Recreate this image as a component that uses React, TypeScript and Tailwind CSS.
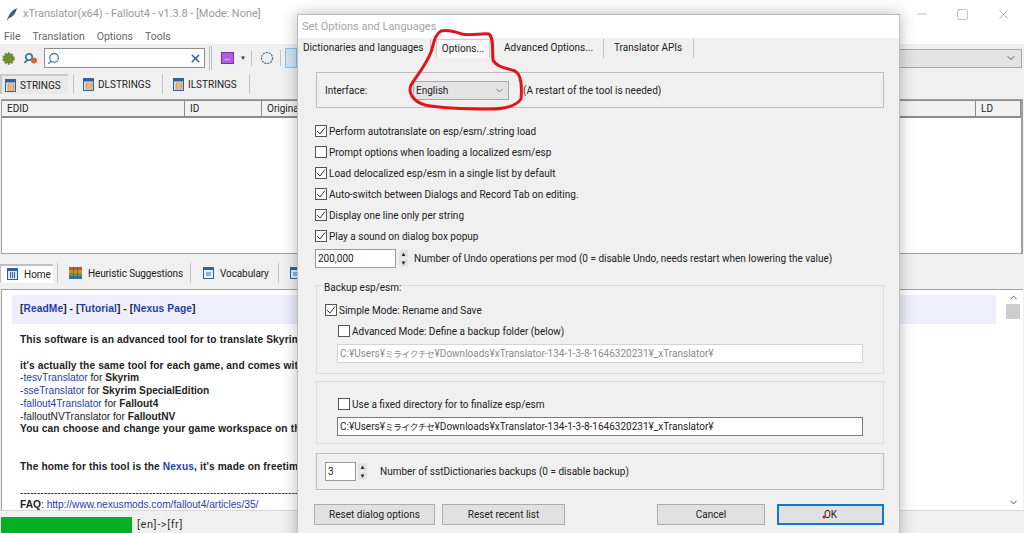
import type { ReactNode } from "react";
import { ChevronDown, ChevronUp, X, Minus, Square, Search } from "lucide-react";

const ui = "font-['Roboto','Noto_Sans',sans-serif]";

function SheetIcon() {
  return (
    <svg width="11" height="13" viewBox="0 0 11 13" className="shrink-0">
      <rect x="0.5" y="0.5" width="10" height="12" fill="#dfe8f2" stroke="#2f6496" />
      <rect x="0.5" y="0.5" width="10" height="3" fill="#2f6496" />
      <rect x="3" y="5" width="6" height="6" fill="#f4d9b8" stroke="#d9772b" strokeWidth="0.7" />
      <path d="M3 7h6M3 9h6" stroke="#d9772b" strokeWidth="0.7" />
    </svg>
  );
}

function HomeIcon() {
  return (
    <svg width="11" height="12" viewBox="0 0 11 12" className="shrink-0">
      <rect x="0.5" y="0.5" width="10" height="11" fill="#dbe8f3" stroke="#2f6496" />
      <rect x="0.5" y="0.5" width="10" height="2.5" fill="#2f6496" />
      <path d="M3.5 4v6M5.5 4v6M7.5 4v6" stroke="#2f6496" />
    </svg>
  );
}

function HeuristicIcon() {
  return (
    <svg width="13" height="12" viewBox="0 0 13 12" className="shrink-0">
      <rect width="13" height="3" fill="#c4552d" />
      <rect y="3" width="13" height="3" fill="#d08c33" />
      <rect y="6" width="13" height="3" fill="#5f9a44" />
      <rect y="9" width="13" height="3" fill="#3b6f9c" />
      <path d="M4.5 0v12M8.5 0v12" stroke="#555" strokeWidth="0.6" />
    </svg>
  );
}

function VocabularyIcon() {
  return (
    <svg width="11" height="12" viewBox="0 0 11 12" className="shrink-0">
      <rect x="0.5" y="0.5" width="10" height="11" fill="#e6eef6" stroke="#2f6496" />
      <rect x="0.5" y="0.5" width="10" height="2.5" fill="#2f6496" />
      <rect x="3" y="5" width="5" height="4" fill="#8fb4d6" />
    </svg>
  );
}

function Sep({ className = "h-[23px]" }: { className?: string }) {
  return <div className={`w-px shrink-0 bg-[#c4c4c4] ${className}`} />;
}

function StringTab({ label, active, w, ml }: { label: string; active?: boolean; w: number; ml: number }) {
  return (
    <div
      style={{ width: w, marginLeft: ml }}
      className={`flex h-[20px] shrink-0 items-center gap-[4px] text-[10px] text-[#222] ${active ? "border-l-2 border-t-2 border-[#c9c9c9] bg-[#e9e9e9] pl-[3px]" : ""}`}
    >
      <SheetIcon />
      {label}
    </div>
  );
}

function Check({ checked }: { checked?: boolean }) {
  return (
    <span className="flex size-[12px] shrink-0 items-center justify-center border border-[#555] bg-white">
      {checked && (
        <svg width="10" height="10" viewBox="0 0 10 10">
          <path d="M1 5l3 3 5-6.5" fill="none" stroke="#333" strokeWidth="1" />
        </svg>
      )}
    </span>
  );
}

function CheckRow({ label, checked, className = "" }: { label: string; checked?: boolean; className?: string }) {
  return (
    <div className={`flex h-[14px] items-center gap-[2px] whitespace-nowrap ${className}`}>
      <Check checked={checked} />
      <span>{label}</span>
    </div>
  );
}

function Spin() {
  return (
    <div className="flex h-[18px] w-[9px] shrink-0 flex-col gap-px text-[#222]">
      <div className="flex h-[8px] items-center justify-center bg-[#e3e3e3] text-[6px] leading-none">▲</div>
      <div className="flex h-[8px] items-center justify-center bg-[#e3e3e3] text-[6px] leading-none">▼</div>
    </div>
  );
}

function Btn({ children, w, primary }: { children: ReactNode; w: number; primary?: boolean }) {
  return (
    <div
      style={{ width: w }}
      className={`flex h-[21px] items-center justify-center bg-[#e1e1e1] text-[10px] ${primary ? "border-2 border-[#0a78d7]" : "border border-[#adadad]"}`}
    >
      {children}
    </div>
  );
}

function Col({ label, w, grow }: { label: string; w?: number; grow?: boolean }) {
  return (
    <div
      style={w ? { width: w } : undefined}
      className={`flex h-full shrink-0 items-center border-r border-[#8c8c8c] pl-[5px] text-[10px] ${grow ? "flex-1" : ""}`}
    >
      {label}
    </div>
  );
}

function PathText() {
  return (
    <>
      C:¥Users¥
      <span className="font-['Noto_Sans_CJK_JP',sans-serif] text-[8.5px] tracking-[-0.2px]">ミライクチセ</span>
      ¥Downloads¥xTranslator-134-1-3-8-1646320231¥_xTranslator¥
    </>
  );
}

export default function App() {
  return (
    <div className={`relative flex h-[533px] w-[1024px] flex-col overflow-hidden bg-[#f0f0f0] text-[#222] ${ui}`}>
      {/* title + menu */}
      <div className="flex h-[28px] shrink-0 items-center bg-white pl-[6px] text-[11px] text-[#9a9a9a]">
        <svg width="12" height="15" viewBox="0 0 12 15" className="mr-[5px] shrink-0">
          <path d="M1 14C2 8 6 3 11 1 10 6 7 10 3 11z" fill="#4a5a78" />
        </svg>
        <span className="tracking-[-0.05px]">xTranslator(x64) - Fallout4 - v1.3.8 - [Mode: None]</span>
        <div className="ml-auto flex items-center gap-[27px] pr-[13px] text-[#8a8a8a]">
          <Minus size={14} strokeWidth={1} />
          <Square size={13} strokeWidth={1} />
          <X size={15} strokeWidth={1} />
        </div>
      </div>
      <div className="flex h-[16px] shrink-0 items-center gap-[12px] bg-white pl-[4px] pt-px text-[10.5px] text-[#666]">
        <span>File</span>
        <span>Translation</span>
        <span>Options</span>
        <span>Tools</span>
      </div>

      {/* toolbar */}
      <div className="flex h-[28px] shrink-0 items-center pl-[2px] pr-[2px]">
        <svg width="13" height="13" viewBox="0 0 13 13" className="shrink-0">
          <circle cx="6.5" cy="6.5" r="5" fill="#6c8f2f" stroke="#6c8f2f" strokeWidth="2.4" strokeDasharray="2 1.2" />
        </svg>
        <svg width="14" height="13" viewBox="0 0 14 13" className="ml-[9px] shrink-0">
          <circle cx="5" cy="5" r="3.2" fill="none" stroke="#2a6ca8" strokeWidth="1.6" />
          <path d="M3 8l-2.5 3" stroke="#2a6ca8" strokeWidth="1.6" />
          <circle cx="10" cy="8.5" r="3" fill="#d9662b" />
        </svg>
        <div className="ml-[6px] flex h-[20px] w-[161px] shrink-0 items-center justify-between border border-[#8f8f8f] bg-white px-[2px]">
          <Search size={13} strokeWidth={2} className="-scale-x-100 text-[#2a6ca8]" />
          <X size={13} strokeWidth={2.5} className="text-[#1f5f96]" />
        </div>
        <div className="ml-[4px] h-[24px] w-[3px] shrink-0 border-x border-[#c2c2c2]" />
        <div className="ml-[9px] flex h-[12px] w-[13px] shrink-0 items-center justify-center border border-[#7a2fb0] bg-[#b45be0] text-[9px] leading-none text-[#bfe3ff]">←</div>
        <span className="ml-[6px] text-[6px] leading-none text-[#333]">▼</span>
        <Sep className="ml-[5px] h-[16px]" />
        <svg width="14" height="14" viewBox="0 0 14 14" className="ml-[8px] shrink-0">
          <circle cx="7" cy="7" r="5.5" fill="none" stroke="#3a6d99" strokeWidth="1.2" strokeDasharray="2 1" />
        </svg>
        <Sep className="ml-[6px] h-[16px]" />
        <div className="ml-[4px] h-[20px] w-[12px] shrink-0 border border-[#8cc1ea] bg-[#cfe5f7]" />
        <div className="ml-auto flex h-[19px] w-[300px] shrink-0 items-center justify-end border border-[#a8a8a8] bg-[#e3e3e3] pr-[4px]">
          <ChevronDown size={12} strokeWidth={1.5} />
        </div>
      </div>

      {/* string tabs */}
      <div className="flex h-[26px] shrink-0 items-center pb-[2px]">
        <StringTab label="STRINGS" active w={68} ml={0} />
        <Sep className="ml-[5px] h-[20px]" />
        <StringTab label="DLSTRINGS" w={70} ml={9} />
        <Sep className="ml-[9px] h-[20px]" />
        <StringTab label="ILSTRINGS" w={68} ml={10} />
        <Sep className="ml-[8px] h-[20px]" />
      </div>

      {/* records table */}
      <div className="mx-[1px] mt-[1px] flex h-[155px] shrink-0 flex-col border-l border-t border-r-2 border-b border-[#a0a0a0] bg-white">
        <div className="flex h-[18px] shrink-0 items-center border-b-2 border-t border-[#8c8c8c] bg-[#f2f2f2]">
          <Col label="EDID" w={183} />
          <Col label="ID" w={77} />
          <Col label="Original" grow />
          <Col label="LD" w={45} />
        </div>
      </div>

      {/* lower tabs */}
      <div className="mt-[7px] flex h-[24px] shrink-0 items-center">
        <div className="flex h-[19px] w-[53px] shrink-0 items-center gap-[6px] border-l border-t-2 border-[#c0c0c0] bg-white pl-[6px] text-[10px]">
          <HomeIcon />
          Home
        </div>
        <Sep className="ml-[4px] h-[20px]" />
        <div className="ml-[11px] flex w-[121px] shrink-0 items-center gap-[6px] whitespace-nowrap text-[10px] tracking-[-0.12px]">
          <HeuristicIcon />
          Heuristic Suggestions
        </div>
        <Sep className="h-[20px]" />
        <div className="ml-[12px] flex w-[75px] shrink-0 items-center gap-[6px] text-[10px] tracking-[-0.1px]">
          <VocabularyIcon />
          Vocabulary
        </div>
        <Sep className="h-[20px]" />
        <div className="ml-[11px]">
          <VocabularyIcon />
        </div>
      </div>

      {/* help pane */}
      <div className="mx-[1px] mt-[4px] flex h-[221px] shrink-0 border-t border-l border-[#a0a0a0] bg-white">
        <div className="min-w-0 flex-1 overflow-hidden whitespace-nowrap pl-[10px] pr-[10px] pt-[5px] font-['Liberation_Sans',sans-serif] text-[10.2px] leading-[12.7px] text-[#222]">
          <div className="flex h-[29px] items-center bg-[#eeeefc] pl-[8px] font-bold tracking-[0.1px] text-[#222]">
            <span>
              [<span className="text-[#1f3fa8]">ReadMe</span>] - [<span className="text-[#1f3fa8]">Tutorial</span>] - [<span className="text-[#1f3fa8]">Nexus Page</span>]
            </span>
          </div>
          <div className="pl-[8px]">
            <p className="mt-[10px] font-bold tracking-[0.12px]">This software is an advanced tool for to translate Skyrim</p>
            <p className="mt-[13px] font-bold tracking-[0.12px]">it's actually the same tool for each game, and comes with</p>
            <p>
              -<span className="text-[#1f3fa8]">tesvTranslator</span> for <b>Skyrim</b>
            </p>
            <p>
              -<span className="text-[#1f3fa8]">sseTranslator</span> for <b>Skyrim SpecialEdition</b>
            </p>
            <p>
              -<span className="text-[#1f3fa8]">fallout4Translator</span> for <b>Fallout4</b>
            </p>
            <p>
              -falloutNVTranslator for <b>FalloutNV</b>
            </p>
            <p className="font-bold tracking-[0.12px]">You can choose and change your game workspace on the</p>
            <p className="mt-[25px] font-bold tracking-[0.12px]">
              The home for this tool is the <span className="text-[#1f3fa8]">Nexus</span>, it's made on freetime
            </p>
            <p className="mt-[13px] overflow-hidden leading-[12px]">{"-".repeat(120)}</p>
            <p>
              <b>FAQ</b>: <span className="text-[#1f3fa8]">http://www.nexusmods.com/fallout4/articles/35/</span>
            </p>
          </div>
        </div>
        <div className="mr-[3px] flex w-[14px] shrink-0 flex-col items-center justify-between py-[2px] text-[#444]">
          <div className="flex w-full flex-col items-center">
            <ChevronUp size={11} strokeWidth={2} />
            <div className="mt-[1px] h-[15px] w-full bg-[#cdcdcd]" />
          </div>
          <ChevronDown size={11} strokeWidth={2} />
        </div>
      </div>

      {/* status bar */}
      <div className="flex flex-1 items-end border-t border-[#d9d9d9] pl-[1px]">
        <div className="h-[16px] w-[131px] shrink-0 bg-[#06b025]" />
        <span className="mb-[1px] ml-[5px] text-[11px] leading-[14px] tracking-[0.6px] text-[#333]">[en]-&gt;[fr]</span>
      </div>

      {/* options dialog */}
      <div className="absolute left-[297px] top-[14px] flex h-[530px] w-[603px] flex-col border border-[#bdbdbd] bg-[#f0f0f0] text-[10px] shadow-[0_0_14px_rgba(0,0,0,0.28)]">
        <div className="flex h-[23px] shrink-0 items-center bg-white pl-[4px] pt-[2px] text-[11px] text-[#a5a5a5]">Set Options and Languages</div>
        <div className="flex h-[20px] shrink-0 items-center whitespace-nowrap text-[10px]">
          <span className="mb-[2px] ml-[5px] w-[127px] shrink-0">Dictionaries and languages</span>
          <Sep className="h-[19px]" />
          <div className="ml-[5px] flex h-[19px] w-[54px] shrink-0 items-center justify-center border-x border-t border-[#d0d0d0] bg-[#f7f7f7]">Options...</div>
          <span className="mb-[2px] ml-[14px] w-[99px] shrink-0">Advanced Options...</span>
          <Sep className="h-[19px]" />
          <span className="mb-[2px] ml-[10px] w-[79px] shrink-0">Translator APIs</span>
          <Sep className="h-[19px]" />
        </div>
        <div className="flex flex-col pl-[18px] pr-[15px] pt-[14px]">
          <div className="flex h-[36px] items-center border border-[#bdbdbd] pl-[8px]">
            <span className="w-[88px] shrink-0">Interface:</span>
            <div className="flex h-[19px] w-[96px] shrink-0 items-center justify-between border border-[#a8a8a8] bg-[#e3e3e3] pl-[2px] pr-[3px]">
              English
              <ChevronDown size={11} strokeWidth={1.2} />
            </div>
            <span className="ml-[14px]">(A restart of the tool is needed)</span>
          </div>

          <div className="-ml-[1px] mt-[16px] flex flex-col gap-[7px]">
            <CheckRow checked label="Perform autotranslate on esp/esm/.string load" />
            <CheckRow label="Prompt options when loading a localized esm/esp" />
            <CheckRow checked label="Load delocalized esp/esm in a single list by default" />
            <CheckRow checked label="Auto-switch between Dialogs and Record Tab on editing." />
            <CheckRow checked label="Display one line only per string" />
            <CheckRow checked label="Play a sound on dialog box popup" />
          </div>
          <div className="-ml-[1px] mt-[6px] flex h-[19px] items-center whitespace-nowrap">
            <div className="flex h-[19px] w-[81px] shrink-0 items-center border border-[#9a9a9a] bg-white pl-[2px]">200,000</div>
            <div className="ml-[3px]"><Spin /></div>
            <span className="ml-[6px]">Number of Undo operations per mod (0 = disable Undo, needs restart when lowering the value)</span>
          </div>

          <div className="relative mt-[17px] h-[89px] border border-[#dcdcdc] pl-[8px] pt-[17px]">
            <span className="absolute -top-[6px] left-[6px] bg-[#f0f0f0] px-[1px]">Backup esp/esm:</span>
            <CheckRow checked label="Simple Mode: Rename and Save" />
            <CheckRow label="Advanced Mode: Define a backup folder (below)" className="ml-[13px] mt-[7px]" />
            <div className="ml-[12px] mt-[6px] flex h-[19px] w-[526px] items-center overflow-hidden whitespace-nowrap border border-[#d4d4d4] bg-white pl-[2px] text-[#8a8a8a]">
              <span><PathText /></span>
            </div>
          </div>

          <div className="mt-[7px] h-[63px] border border-[#dcdcdc] pl-[20px] pt-[15px]">
            <CheckRow label="Use a fixed directory for to finalize esp/esm" className="ml-[1px]" />
            <div className="mt-[6px] flex h-[19px] w-[526px] items-center overflow-hidden whitespace-nowrap border border-[#7a7a7a] bg-white pl-[2px]">
              <span><PathText /></span>
            </div>
          </div>

          <div className="mt-[9px] flex h-[37px] items-center border border-[#bdbdbd] pl-[8px]">
            <div className="flex h-[19px] w-[31px] shrink-0 items-center border border-[#9a9a9a] bg-white pl-[2px]">3</div>
            <div className="ml-[2px]"><Spin /></div>
            <span className="ml-[13px]">Number of sstDictionaries backups (0 = disable backup)</span>
          </div>

          <div className="mt-[14px] flex items-center">
            <div className="-ml-[2px]"><Btn w={121}>Reset dialog options</Btn></div>
            <div className="ml-[7px]"><Btn w={123}>Reset recent list</Btn></div>
            <div className="ml-auto"><Btn w={108}>Cancel</Btn></div>
            <div className="ml-[12px]"><Btn w={107} primary>OK</Btn></div>
          </div>
        </div>
      </div>

      {/* red marker scribble */}
      <svg className="pointer-events-none absolute left-0 top-0" width="1024" height="533" viewBox="0 0 1024 533">
        <path
          d="M462 34C470 36 482 33 489 34C494 38 492 50 493 60C497 68 508 68 515 71C522 75 522 88 521 99C516 106 505 109 490 109C470 109 445 109 425 105C412 101 408 92 411 85C418 74 426 65 431 52C434 44 434 35 441 31C449 29 456 32 462 34Z"
          fill="none"
          stroke="#e0141c"
          strokeWidth="3"
          strokeLinejoin="round"
        />
        <circle cx="824" cy="517" r="1.5" fill="#e0141c" />
      </svg>
    </div>
  );
}
